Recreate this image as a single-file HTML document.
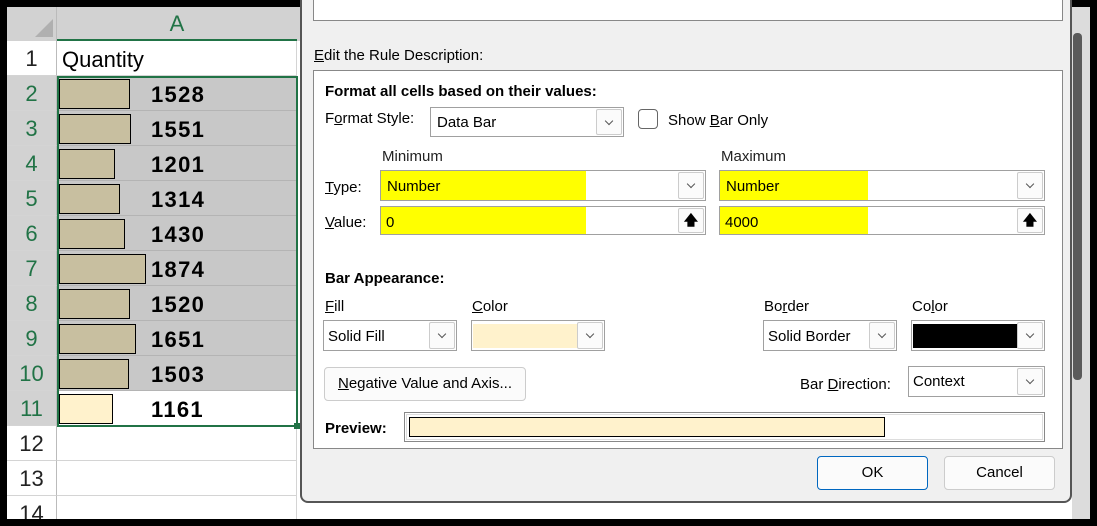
<!DOCTYPE html>
<html><head><meta charset="utf-8"><style>
*{box-sizing:border-box;margin:0;padding:0}
body{width:1097px;height:526px;background:#000;position:relative;overflow:hidden;font-family:"Liberation Sans",sans-serif;}
.a{position:absolute}
.sheet{left:7px;top:7px;width:1083px;height:512px;background:#fff;overflow:hidden}
.rh{position:absolute;left:0;width:50px;height:35px;border-bottom:1px solid #d4d4d4;border-right:1px solid #bbb;font-size:22px;text-align:center;line-height:35px;color:#222}
.rh.s{background:#d2d2d2;color:#217346}
.cell{position:absolute;left:50px;width:240px;height:35px;border-bottom:1px solid #d4d4d4;border-right:1px solid #d4d4d4}
.cell.s{background:#c8c8c8;border-bottom-color:#b4b4b4}
.bar{position:absolute;left:2px;top:3px;height:30px;border:1px solid #000;background:#c8bfa0}
.num{position:absolute;left:94px;top:0;line-height:37px;font-weight:bold;font-size:22px;letter-spacing:1.3px;color:#000}
.dlg{left:300px;top:0;width:772px;height:503px;background:#f0f0f0;border:2px solid #555;border-top:none;border-radius:0 0 8px 8px;font-size:15px;color:#000}
.t{position:absolute;font-size:15px;white-space:nowrap}
.b{font-weight:bold}
.combo{position:absolute;background:#fff;border:1px solid #a0a0a0}
.dd{position:absolute;right:1px;top:1px;bottom:1px;width:26px;background:#fbfbfb;border:1px solid #ccc;border-radius:2px}
.dd:after{content:"";position:absolute;left:9px;top:8px;width:5px;height:5px;border-right:1px solid #555;border-bottom:1px solid #555;transform:rotate(45deg)}
.up{position:absolute;right:1px;top:1px;bottom:1px;width:26px;background:#fbfbfb;border:1px solid #ccc;border-radius:2px;text-align:center;font-size:14px;line-height:22px;font-weight:bold}
.yl{position:absolute;left:0;top:0;bottom:0;background:#ffff00}
u{text-decoration:underline}
.btn{position:absolute;background:#fbfbfb;border:1px solid #ccc;border-radius:4px;text-align:center;font-size:15px}
</style></head><body>
<div class="a sheet">
 <div class="a" style="left:0;top:0;width:50px;height:34px;background:#d2d2d2;border-right:1px solid #bbb"></div>
 <div class="a" style="left:28px;top:12px;width:0;height:0;border-left:18px solid transparent;border-bottom:18px solid #b0b0b0"></div>
 <div class="a" style="left:50px;top:0;width:240px;height:34px;background:#d2d2d2;color:#217346;font-size:22px;text-align:center;line-height:34px;border-bottom:2px solid #217346">A</div>
 <div class="a" style="left:290px;top:0;width:800px;height:34px;background:#d2d2d2"></div>
 <div id="rows"></div>
</div>
<div class="a" style="left:57px;top:76px;width:241px;height:351px;border:2px solid #217346"></div>
<div class="a" style="left:294px;top:423px;width:6px;height:6px;background:#217346"></div>
<div class="a" style="left:1072px;top:7px;width:18px;height:512px;background:#dcdcdc"></div>
<div class="a" style="left:1073px;top:33px;width:9px;height:347px;background:#5a5a5a;border-radius:4px"></div>

<div class="a dlg">
 <div class="a" style="left:11px;top:0;width:750px;height:21px;background:#fff;border:1px solid #888;border-top:none"></div>
 <div class="t" style="left:12px;top:47px"><u>E</u>dit the Rule Description:</div>
 <div class="a" style="left:11px;top:70px;width:750px;height:379px;background:#fff;border:1px solid #888"></div>
 <div class="t b" style="left:23px;top:83px">Format all cells based on their values:</div>
 <div class="t" style="left:23px;top:110px">F<u>o</u>rmat Style:</div>
 <div class="combo" style="left:128px;top:107px;width:194px;height:30px"><span class="t" style="left:6px;top:6px">Data Bar</span><div class="dd"></div></div>
 <div class="a" style="left:336px;top:109px;width:20px;height:20px;border:1px solid #666;border-radius:4px;background:#fff"></div>
 <div class="t" style="left:366px;top:112px">Show <u>B</u>ar Only</div>
 <div class="t" style="left:80px;top:148px;color:#222">Minimum</div>
 <div class="t" style="left:419px;top:148px;color:#222">Maximum</div>
 <div class="t" style="left:23px;top:179px"><u>T</u>ype:</div>
 <div class="t" style="left:23px;top:214px"><u>V</u>alue:</div>
 <div class="combo" style="left:78px;top:170px;width:326px;height:31px"><div class="yl" style="width:205px"></div><span class="t" style="left:6px;top:7px">Number</span><div class="dd"></div></div>
 <div class="combo" style="left:78px;top:206px;width:326px;height:29px"><div class="yl" style="width:205px"></div><span class="t" style="left:5px;top:7px">0</span><div class="up">🡅</div></div>
 <div class="combo" style="left:417px;top:170px;width:326px;height:31px"><div class="yl" style="width:148px"></div><span class="t" style="left:6px;top:7px">Number</span><div class="dd"></div></div>
 <div class="combo" style="left:417px;top:206px;width:326px;height:29px"><div class="yl" style="width:148px"></div><span class="t" style="left:5px;top:7px">4000</span><div class="up">🡅</div></div>
 <div class="t b" style="left:23px;top:270px">Bar Appearance:</div>
 <div class="t" style="left:23px;top:298px"><u>F</u>ill</div>
 <div class="t" style="left:170px;top:298px"><u>C</u>olor</div>
 <div class="t" style="left:462px;top:298px">Bo<u>r</u>der</div>
 <div class="t" style="left:610px;top:298px">Co<u>l</u>or</div>
 <div class="combo" style="left:21px;top:320px;width:134px;height:31px"><span class="t" style="left:4px;top:7px">Solid Fill</span><div class="dd"></div></div>
 <div class="combo" style="left:169px;top:320px;width:134px;height:31px"><div class="a" style="left:1px;top:3px;width:104px;height:24px;background:#fff2cc"></div><div class="dd"></div></div>
 <div class="combo" style="left:461px;top:320px;width:134px;height:31px"><span class="t" style="left:4px;top:7px">Solid Border</span><div class="dd"></div></div>
 <div class="combo" style="left:609px;top:320px;width:134px;height:31px"><div class="a" style="left:1px;top:3px;width:104px;height:24px;background:#000"></div><div class="dd"></div></div>
 <div class="btn" style="left:22px;top:367px;width:202px;height:34px;line-height:32px"><u>N</u>egative Value and Axis...</div>
 <div class="t" style="left:498px;top:376px">Bar <u>D</u>irection:</div>
 <div class="combo" style="left:606px;top:366px;width:137px;height:31px"><span class="t" style="left:4px;top:6px">Context</span><div class="dd"></div></div>
 <div class="t b" style="left:23px;top:420px">Preview:</div>
 <div class="a" style="left:102px;top:412px;width:641px;height:30px;border:1px solid #888;background:#fff"><div class="a" style="left:1px;top:1px;right:1px;bottom:1px;border:1px solid #ddd"></div><div class="a" style="left:4px;top:4px;width:476px;height:20px;background:#fff2cc;border:1px solid #000"></div></div>
 <div class="btn" style="left:515px;top:456px;width:111px;height:34px;line-height:32px;border:1px solid #0067c0">OK</div>
 <div class="btn" style="left:642px;top:456px;width:111px;height:34px;line-height:32px">Cancel</div>
</div>
<script>
var vals=[null,1528,1551,1201,1314,1430,1874,1520,1651,1503,1161];
var h='';
for(var n=1;n<=14;n++){var yy=34+35*(n-1);var s=(n>=2&&n<=11);
h+='<div class="rh'+(s?' s':'')+'" style="top:'+yy+'px">'+n+'</div>';
var c='';
if(n==1)c='<span style="position:absolute;left:5px;line-height:37px;font-size:22px">Quantity</span>';
if(n>=2&&n<=11){var v=vals[n-1];c='<div class="bar" style="width:'+Math.round(v*0.0465)+'px;'+(n==11?'background:#fff2cc':'')+'"></div><span class="num">'+v+'</span>';}
h+='<div class="cell'+(s&&n<11?' s':'')+'" style="top:'+yy+'px">'+c+'</div>';}
document.getElementById('rows').innerHTML=h;
</script>
</body></html>
